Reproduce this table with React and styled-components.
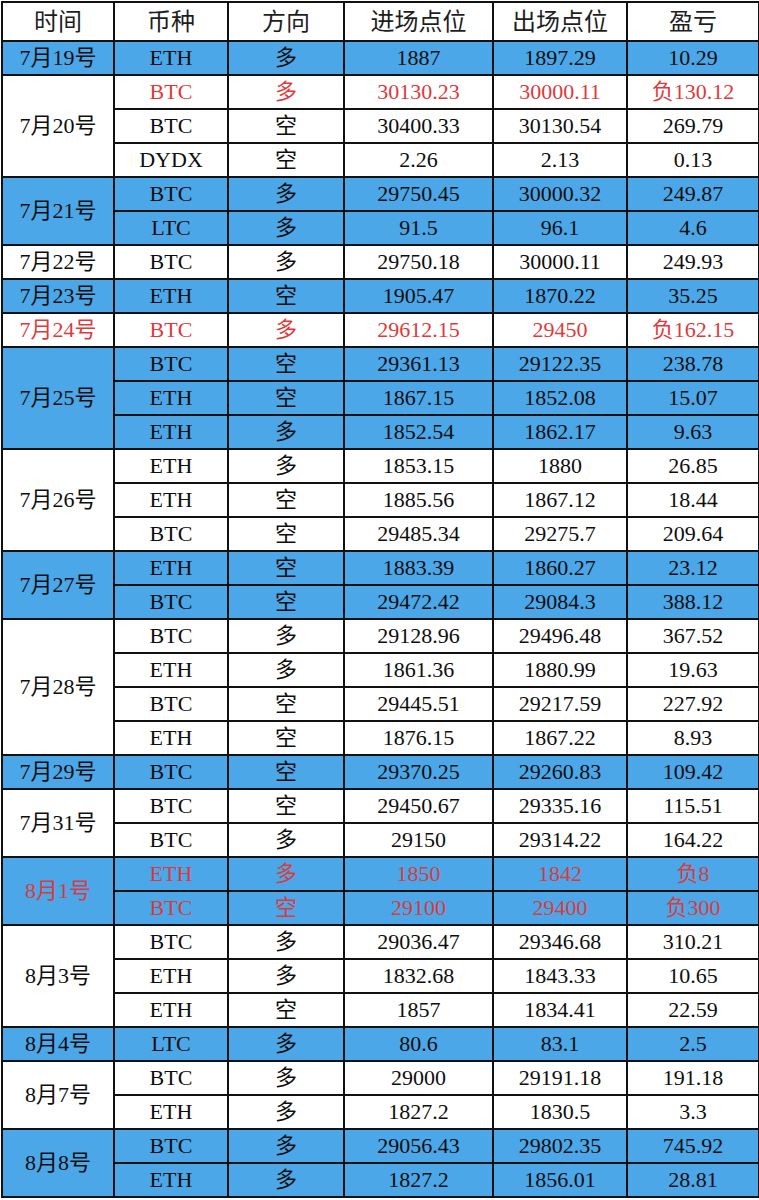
import React from "react";
import styled, { createGlobalStyle } from "styled-components";

const GlobalStyle = createGlobalStyle`
  html, body { margin: 0; padding: 0; background: #ffffff; }
  body { width: 759px; height: 1200px; overflow: hidden; }
`;

const BLUE = "#4ba7e8";
const RED = "#df3a3a";
const INK = "#0e0e0e";

const Table = styled.table`
  border-collapse: collapse;
  table-layout: fixed;
  width: 757px;
  margin: 1px 0 0 1px;
  font-family: "Liberation Serif", "Noto Sans CJK SC", serif;
  font-size: 22px;
  color: ${INK};
`;

const HeadCell = styled.th`
  height: 34px;
  padding: 0 0 3px;
  border: 2px solid #111;
  background: #fff;
  font-family: "Noto Sans CJK SC", sans-serif;
  font-weight: 400;
  font-size: 24px;
  color: #1e1e1e;
  text-align: center;
  vertical-align: middle;
  line-height: 1;
`;

const Cell = styled.td`
  height: 32px;
  padding: 0;
  border: 2px solid #111;
  background: ${(p) => (p.$blue ? BLUE : "#fff")};
  color: ${(p) => (p.$red ? RED : INK)};
  text-align: center;
  vertical-align: middle;
  line-height: 1;
  white-space: nowrap;
`;

const cols = [112, 114, 116, 149, 134, 132];

const groups = [
  ["7月19号", [["ETH", "多", "1887", "1897.29", "10.29"]]],
  ["7月20号", [
    ["BTC", "多", "30130.23", "30000.11", "负130.12", true],
    ["BTC", "空", "30400.33", "30130.54", "269.79"],
    ["DYDX", "空", "2.26", "2.13", "0.13"],
  ]],
  ["7月21号", [
    ["BTC", "多", "29750.45", "30000.32", "249.87"],
    ["LTC", "多", "91.5", "96.1", "4.6"],
  ]],
  ["7月22号", [["BTC", "多", "29750.18", "30000.11", "249.93"]]],
  ["7月23号", [["ETH", "空", "1905.47", "1870.22", "35.25"]]],
  ["7月24号", [["BTC", "多", "29612.15", "29450", "负162.15", true]], true],
  ["7月25号", [
    ["BTC", "空", "29361.13", "29122.35", "238.78"],
    ["ETH", "空", "1867.15", "1852.08", "15.07"],
    ["ETH", "多", "1852.54", "1862.17", "9.63"],
  ]],
  ["7月26号", [
    ["ETH", "多", "1853.15", "1880", "26.85"],
    ["ETH", "空", "1885.56", "1867.12", "18.44"],
    ["BTC", "空", "29485.34", "29275.7", "209.64"],
  ]],
  ["7月27号", [
    ["ETH", "空", "1883.39", "1860.27", "23.12"],
    ["BTC", "空", "29472.42", "29084.3", "388.12"],
  ]],
  ["7月28号", [
    ["BTC", "多", "29128.96", "29496.48", "367.52"],
    ["ETH", "多", "1861.36", "1880.99", "19.63"],
    ["BTC", "空", "29445.51", "29217.59", "227.92"],
    ["ETH", "空", "1876.15", "1867.22", "8.93"],
  ]],
  ["7月29号", [["BTC", "空", "29370.25", "29260.83", "109.42"]]],
  ["7月31号", [
    ["BTC", "空", "29450.67", "29335.16", "115.51"],
    ["BTC", "多", "29150", "29314.22", "164.22"],
  ]],
  ["8月1号", [
    ["ETH", "多", "1850", "1842", "负8", true],
    ["BTC", "空", "29100", "29400", "负300", true],
  ], true],
  ["8月3号", [
    ["BTC", "多", "29036.47", "29346.68", "310.21"],
    ["ETH", "多", "1832.68", "1843.33", "10.65"],
    ["ETH", "空", "1857", "1834.41", "22.59"],
  ]],
  ["8月4号", [["LTC", "多", "80.6", "83.1", "2.5"]]],
  ["8月7号", [
    ["BTC", "多", "29000", "29191.18", "191.18"],
    ["ETH", "多", "1827.2", "1830.5", "3.3"],
  ]],
  ["8月8号", [
    ["BTC", "多", "29056.43", "29802.35", "745.92"],
    ["ETH", "多", "1827.2", "1856.01", "28.81"],
  ]],
];

const headers = ["时间", "币种", "方向", "进场点位", "出场点位", "盈亏"];

export default function App() {
  return (
    <>
      <GlobalStyle />
      <Table>
        <colgroup>
          {cols.map((w, i) => (
            <col key={i} style={{ width: w }} />
          ))}
        </colgroup>
        <thead>
          <tr>
            {headers.map((h) => (
              <HeadCell key={h}>{h}</HeadCell>
            ))}
          </tr>
        </thead>
        <tbody>
          {groups.map(([date, rows, dateRed], gi) => {
            const blue = gi % 2 === 0;
            return rows.map((r, ri) => {
              const red = !!r[5];
              return (
                <tr key={date + ri}>
                  {ri === 0 && (
                    <Cell rowSpan={rows.length} $blue={blue} $red={!!dateRed}>
                      {date}
                    </Cell>
                  )}
                  {r.slice(0, 5).map((v, ci) => (
                    <Cell key={ci} $blue={blue} $red={red}>
                      {v}
                    </Cell>
                  ))}
                </tr>
              );
            });
          })}
        </tbody>
      </Table>
    </>
  );
}
